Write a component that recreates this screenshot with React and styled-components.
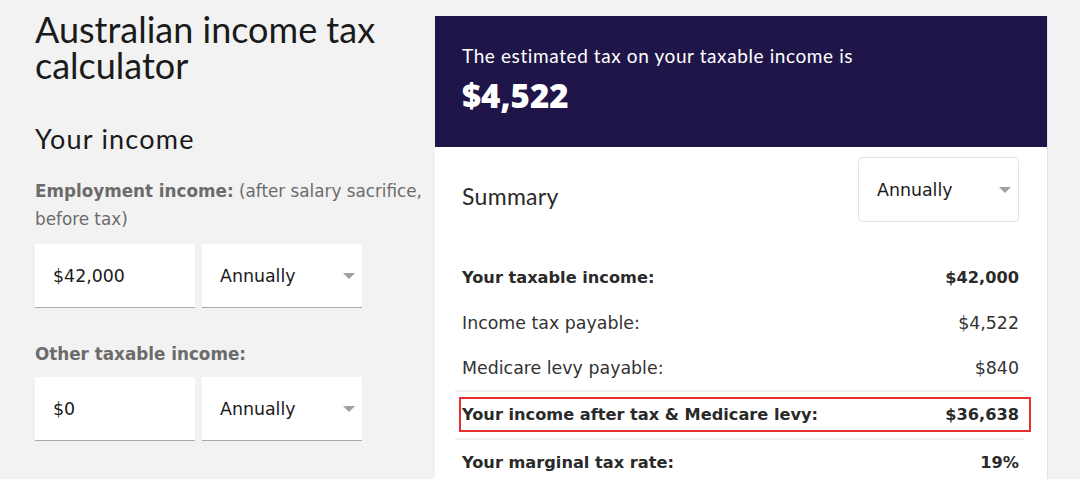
import React from 'react'
import styled, { createGlobalStyle } from 'styled-components'

const GlobalStyle = createGlobalStyle`
    html, body {
        margin: 0;
        padding: 0;
        background-color: #f2f2f2;
    }
    body {
        font-family: "DejaVu Sans", "Open Sans", sans-serif;
        color: #222;
    }
`

const Page = styled.div`
    display: flex;
    align-items: flex-start;
    padding-left: 35px;
    height: 479px;
    overflow: hidden;
`

const InputColumn = styled.div`
    width: 400px;
    flex-shrink: 0;
    padding-top: 11px;
`

const Title = styled.h1`
    margin: 0;
    font-family: "Lato", sans-serif;
    font-weight: 400;
    font-size: 36px;
    line-height: 36px;
    color: #1a1a1a;
`

const SectionTitle = styled.h2`
    margin: ${props => props.top || 38}px 0 0;
    font-family: "Lato", sans-serif;
    font-weight: 400;
    font-size: 27px;
    line-height: 36px;
    letter-spacing: 1.2px;
    color: #1a1a1a;
`

const FieldLabel = styled.div`
    margin-top: ${props => props.top || 20}px;
    font-family: "DejaVu Sans", sans-serif;
    font-size: 16.8px;
    line-height: 28px;
    color: #6b6b6b;
    b {
        font-weight: 700;
    }
`

const FieldRow = styled.div`
    display: flex;
    gap: 7px;
    margin-top: ${props => props.top || 10}px;
`

const Box = styled.div`
    width: 160px;
    height: 64px;
    background: #fff;
    border-bottom: 1px solid #aaa;
    display: flex;
    align-items: center;
    justify-content: space-between;
    padding: 0 7px 0 18px;
    box-sizing: border-box;
    font-family: "DejaVu Sans", sans-serif;
    font-size: 17.4px;
    color: #1a1a1a;
`

const Caret = styled.span`
    width: 0;
    height: 0;
    border-left: 6px solid transparent;
    border-right: 6px solid transparent;
    border-top: 6px solid #a0a0a0;
`

const ResultPanel = styled.div`
    margin-top: 16px;
    width: 613px;
    flex-shrink: 0;
    background: #fff;
    border-right: 1px solid #e2e2e2;
    box-sizing: border-box;
`

const Banner = styled.div`
    background: #1f1548;
    color: #fff;
    padding: 28px 27px 0;
    height: 131px;
    box-sizing: border-box;
`

const BannerText = styled.div`
    font-family: "Lato", sans-serif;
    font-size: 19px;
    line-height: 24px;
    letter-spacing: 0.6px;
`

const BannerAmount = styled.div`
    margin-top: 8px;
    font-family: "Open Sans", sans-serif;
    font-weight: 800;
    font-size: 33px;
    line-height: 40px;
`

const SummaryHead = styled.div`
    display: flex;
    align-items: center;
    justify-content: space-between;
    padding: 10px 28px 0 27px;
`

const SummaryTitle = styled.div`
    font-family: "Lato", sans-serif;
    font-size: 23px;
    letter-spacing: 0.3px;
    color: #2a2a2a;
    padding-top: 12px;
`

const PeriodSelect = styled.div`
    width: 161px;
    height: 65px;
    border: 1px solid #e3e3e3;
    border-radius: 4px;
    box-sizing: border-box;
    display: flex;
    align-items: center;
    justify-content: space-between;
    padding: 0 7px 0 18px;
    font-family: "DejaVu Sans", sans-serif;
    font-size: 17.4px;
    color: #1a1a1a;
`

const Rows = styled.div`
    padding: 32px 23px 0 20px;
`

const Row = styled.div`
    display: flex;
    justify-content: space-between;
    align-items: center;
    height: 46px;
    box-sizing: border-box;
    padding: 0 5px 0 7px;
    font-family: "DejaVu Sans", sans-serif;
    font-size: ${props => (props.bold ? 16.2 : 17.4)}px;
    font-weight: ${props => (props.bold ? 700 : 400)};
    color: ${props => (props.bold ? '#2a2a2a' : '#333')};
    border-bottom: ${props => (props.divider ? '2px solid #eee' : 'none')};
    border-top: ${props => (props.topline ? '2px solid #eee' : 'none')};
`

const HighlightRow = styled(Row)`
    height: 35px;
    margin: 5px -7px 6px 4px;
    padding: 0 10px 0 1px;
    border: 2px solid #e8302e;
`

const rows = [
    { label: 'Your taxable income:', value: '$42,000', bold: true },
    { label: 'Income tax payable:', value: '$4,522' },
    { label: 'Medicare levy payable:', value: '$840', divider: true },
]

const Dropdown = ({ children }) => (
    <>
        <span>{children}</span>
        <Caret />
    </>
)

const App = () => {
    return (
        <>
            <GlobalStyle />
            <Page>
                <InputColumn>
                    <Title>Australian income tax calculator</Title>
                    <SectionTitle top={38}>Your income</SectionTitle>
                    <FieldLabel top={20}>
                        <b>Employment income:</b> (after salary sacrifice, before tax)
                    </FieldLabel>
                    <FieldRow top={11}>
                        <Box>$42,000</Box>
                        <Box><Dropdown>Annually</Dropdown></Box>
                    </FieldRow>
                    <FieldLabel top={32}>
                        <b>Other taxable income:</b>
                    </FieldLabel>
                    <FieldRow top={9}>
                        <Box>$0</Box>
                        <Box><Dropdown>Annually</Dropdown></Box>
                    </FieldRow>
                    <SectionTitle top={31}>Deductions</SectionTitle>
                </InputColumn>
                <ResultPanel>
                    <Banner>
                        <BannerText>The estimated tax on your taxable income is</BannerText>
                        <BannerAmount>$4,522</BannerAmount>
                    </Banner>
                    <SummaryHead>
                        <SummaryTitle>Summary</SummaryTitle>
                        <PeriodSelect><Dropdown>Annually</Dropdown></PeriodSelect>
                    </SummaryHead>
                    <Rows>
                        {rows.map((r, i) => (
                            <Row key={i} bold={r.bold} divider={r.divider}>
                                <span>{r.label}</span>
                                <span>{r.value}</span>
                            </Row>
                        ))}
                        <HighlightRow bold>
                            <span>Your income after tax &amp; Medicare levy:</span>
                            <span>$36,638</span>
                        </HighlightRow>
                        <Row bold topline>
                            <span>Your marginal tax rate:</span>
                            <span>19%</span>
                        </Row>
                    </Rows>
                </ResultPanel>
            </Page>
        </>
    )
}

export default App
